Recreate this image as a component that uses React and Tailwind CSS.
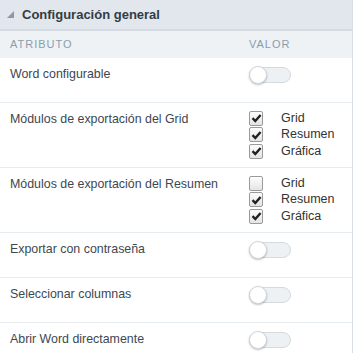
const Toggle = () => (
  <div className="relative h-[16px] w-[42px] rounded-full border border-[#d3dbe1] bg-[#eef1f4]">
    <div className="absolute -left-[1px] -top-[2px] h-[18px] w-[18px] rounded-full border border-[#cfd6dc] bg-white shadow-[0_1px_2px_rgba(0,0,0,0.25)]" />
  </div>
);

const Check = ({ checked, label }) => (
  <div className="flex h-[16.5px] items-center">
    <div className="flex h-[15px] w-[14px] items-center justify-center rounded-[2px] border border-[#9a9a9a] bg-gradient-to-b from-[#fdfdfd] to-[#e4e4e4]">
      {checked && (
        <svg width="11" height="10" viewBox="0 0 11 10">
          <path d="M1.5 5.2 L4.3 8 L9.6 2" fill="none" stroke="#222" strokeWidth="2.4" />
        </svg>
      )}
    </div>
    <span className="ml-[18px] text-[12.5px] text-[#333]">{label}</span>
  </div>
);

const Row = ({ label, children, tall }) => (
  <div
    className={`flex border-b border-[#e6ebef] ${tall ? "h-[65px] pt-[7px]" : "h-[45px] pt-[7px]"}`}
  >
    <div className="w-[249px] pl-[10px] pt-[1px] text-[12.4px] leading-[16px] text-[#3d4852]">
      {label}
    </div>
    <div className="flex-1">{children}</div>
  </div>
);

export default function App() {
  const rows = [
    { label: "Word configurable", toggle: true },
    { label: "Módulos de exportación del Grid", checks: [true, true, true] },
    { label: "Módulos de exportación del Resumen", checks: [false, true, true] },
    { label: "Exportar con contraseña", toggle: true },
    { label: "Seleccionar columnas", toggle: true },
    { label: "Abrir Word directamente", toggle: true },
  ];
  const names = ["Grid", "Resumen", "Gráfica"];

  return (
    <div
      className="h-[353px] w-[353px] overflow-hidden border-r border-[#d8dee3] bg-white"
      style={{ fontFamily: '"Liberation Sans", Arial, sans-serif' }}
    >
      <div className="flex h-[31px] items-center border-b-2 border-[#d3dae0] bg-[#e1e7ed] pl-[7px]">
        <svg width="7" height="7" viewBox="0 0 7 7" className="mr-[8px]">
          <path d="M7 0 L7 7 L0 7 Z" fill="#8d9aa6" />
        </svg>
        <span className="text-[13px] font-bold text-[#333c44]">Configuración general</span>
      </div>
      <div className="flex h-[27px] items-center bg-[#eef2f5] text-[11px] tracking-[1px] text-[#8c9cab]">
        <div className="w-[249px] pl-[10px]">ATRIBUTO</div>
        <div>VALOR</div>
      </div>
      {rows.map((r) => (
        <Row key={r.label} label={r.label} tall={!!r.checks}>
          {r.toggle && (
            <div className="pt-[2px]">
              <Toggle />
            </div>
          )}
          {r.checks && (
            <div className="flex flex-col">
              {r.checks.map((c, i) => (
                <Check key={names[i]} checked={c} label={names[i]} />
              ))}
            </div>
          )}
        </Row>
      ))}
    </div>
  );
}
